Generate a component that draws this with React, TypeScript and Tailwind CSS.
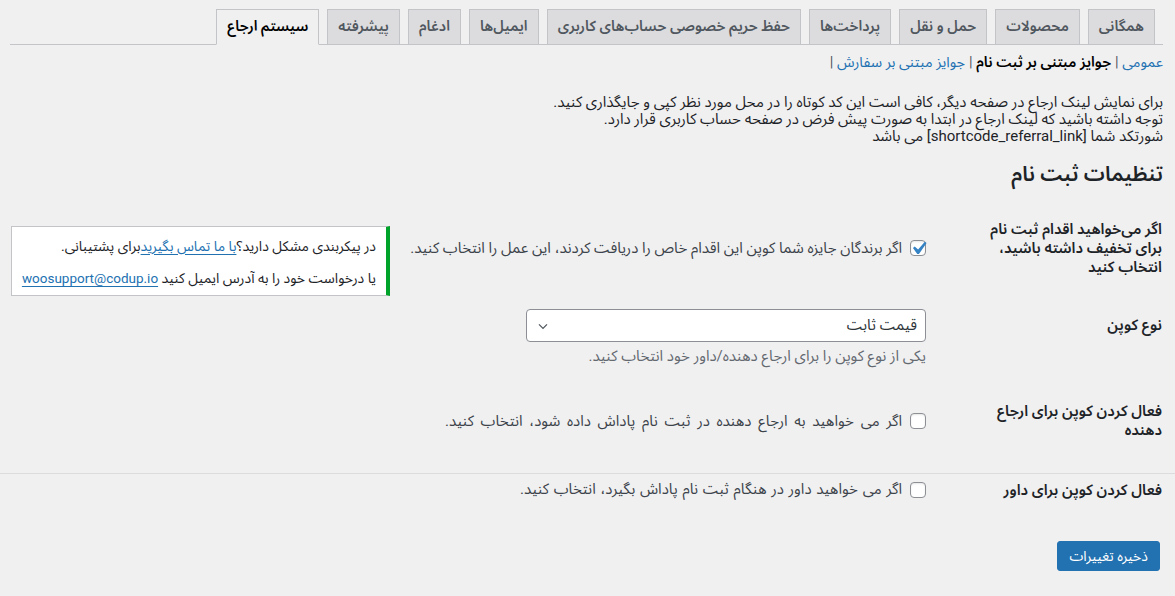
import React from 'react'

const tabs = [
  { label: 'همگانی' },
  { label: 'محصولات' },
  { label: 'حمل و نقل' },
  { label: 'پرداخت‌ها' },
  { label: 'حفظ حریم خصوصی حساب‌های کاربری' },
  { label: 'ایمیل‌ها' },
  { label: 'ادغام' },
  { label: 'پیشرفته' },
  { label: 'سیستم ارجاع', active: true },
]

function Checkbox({ checked }: { checked?: boolean }) {
  return (
    <span className="relative inline-flex h-4 w-4 shrink-0 rounded-[4px] border border-[#8c8f94] bg-white shadow-[inset_0_1px_2px_rgba(0,0,0,0.1)]">
      {checked && (
        <svg viewBox="2 2 16 16" className="absolute -left-[3px] -top-[3px] h-[21px] w-[21px]">
          <path fill="#3582c4" d="M14.83 4.89l1.34.94-5.81 8.38H9.02L5.78 9.67l1.34-1.25 2.57 2.4z" />
        </svg>
      )}
    </span>
  )
}

export default function App() {
  return (
    <div
      dir="rtl"
      className="min-h-[596px] bg-[#f0f0f1] text-[15px] text-[#3c434a] font-['Roboto','Noto_Sans_Arabic','DejaVu_Sans',sans-serif]"
    >
      <div className="pl-[10px] pr-[12px] pt-[9px]">
        {/* tabs */}
        <nav className="flex items-end gap-2 border-b border-[#c3c4c7] pr-2">
          {tabs.map((tab) => (
            <a
              key={tab.label}
              className={`-mb-px h-[36px] whitespace-nowrap border border-[#c3c4c7] px-2.5 py-[5px] text-[14.5px] font-semibold leading-6 ${
                tab.active
                  ? 'border-b-[#f0f0f1] bg-[#f0f0f1] text-black'
                  : 'bg-[#dcdcde] text-[#50575e]'
              }`}
            >
              {tab.label}
            </a>
          ))}
        </nav>

        {/* sub nav */}
        <ul className="mt-2 flex items-center gap-1 text-[14.5px] leading-5 text-[#50575e]">
          <li>
            <a className="text-[#2271b1]">عمومی</a> |
          </li>
          <li>
            <span className="font-semibold text-black">جوایز مبتنی بر ثبت نام</span> |
          </li>
          <li>
            <a className="text-[#2271b1]">جوایز مبتنی بر سفارش</a> |
          </li>
        </ul>

        <div className="mt-[21px] leading-[17px] text-[#1d2327]">
          <p>برای نمایش لینک ارجاع در صفحه دیگر، کافی است این کد کوتاه را در محل مورد نظر کپی و جایگذاری کنید.</p>
          <p>توجه داشته باشید که لینک ارجاع در ابتدا به صورت پیش فرض در صفحه حساب کاربری قرار دارد.</p>
          <p>شورتکد شما [shortcode_referral_link] می باشد</p>
        </div>

        <h2 className="mt-[17px] text-[21px] font-semibold leading-6 text-[#1d2327]">تنظیمات ثبت نام</h2>

        {/* row 1 */}
        <div className="mt-[13px] flex h-[98px] items-center">
          <div className="w-[227px] shrink-0 pr-px text-[15px] font-semibold leading-[19px] text-[#1d2327]">
            <div className="whitespace-nowrap">اگر می‌خواهید اقدام ثبت نام</div>
            <div className="whitespace-nowrap">برای تخفیف داشته باشید،</div>
            <div className="whitespace-nowrap">انتخاب کنید</div>
          </div>
          <div className="flex flex-1 items-center gap-2 pr-[10px] text-[#3c434a]">
            <Checkbox checked />
            <span className="whitespace-nowrap">اگر برندگان جایزه شما کوپن این اقدام خاص را دریافت کردند، این عمل را انتخاب کنید.</span>
          </div>
          <div className="ml-px mt-[27px] flex h-[70px] w-[379px] shrink-0 flex-col justify-center gap-[13px] self-start whitespace-nowrap border border-[#c3c4c7] border-r-4 border-r-[#00a32a] bg-white pl-2 pr-[10px] pt-[2px] text-[14px] leading-[19px] text-[#1d2327]">
            <p>
              در پیکربندی مشکل دارید؟<a className="text-[#2271b1] underline underline-offset-[3px]">با ما تماس بگیرید</a>برای پشتیبانی.
            </p>
            <p>
              یا درخواست خود را به آدرس ایمیل کنید{' '}
              <a className="text-[13.5px] text-[#2271b1] underline underline-offset-[3px]">woosupport@codup.io</a>
            </p>
          </div>
        </div>

        {/* row 2 */}
        <div className="flex h-[85px] items-start">
          <div className="w-[227px] shrink-0 pr-px pt-[18px] text-[15px] font-semibold leading-5 text-[#1d2327]">
            نوع کوپن
          </div>
          <div className="pr-[10px] pt-[12px]">
            <div className="flex h-[33px] w-[400px] items-center justify-between rounded-[4px] border border-[#8c8f94] bg-white pl-2 pr-2 text-[15px] text-[#2c3338]">
              <span>قیمت ثابت</span>
              <svg viewBox="0 0 20 20" className="h-4 w-4" fill="none" stroke="#50575e" strokeWidth="1.6">
                <path d="M5 8l5 5 5-5" />
              </svg>
            </div>
            <p className="mt-[6px] leading-[17px] text-[#646970]">یکی از نوع کوپن را برای ارجاع دهنده/داور خود انتخاب کنید.</p>
          </div>
        </div>

        {/* row 3 */}
        <div className="flex h-[78px] items-center">
          <div className="w-[227px] shrink-0 pr-px text-[15px] font-semibold leading-[19px] text-[#1d2327]">
            <div className="whitespace-nowrap">فعال کردن کوپن برای ارجاع</div>
            <div className="whitespace-nowrap">دهنده</div>
          </div>
          <div className="flex items-center gap-2 pr-[10px]">
            <Checkbox />
            <span className="whitespace-nowrap [word-spacing:3px]">اگر می خواهید به ارجاع دهنده در ثبت نام پاداش داده شود، انتخاب کنید.</span>
          </div>
        </div>
      </div>

      <div className="mt-[13px] border-t border-[#dcdcde]" />

      <div className="pl-[10px] pr-[12px]">
        {/* row 4 */}
        <div className="flex h-[31px] items-center">
          <div className="w-[227px] shrink-0 pr-px text-[15px] font-semibold leading-5 text-[#1d2327]">
            فعال کردن کوپن برای داور
          </div>
          <div className="flex items-center gap-2 pr-[10px]">
            <Checkbox />
            <span className="whitespace-nowrap [word-spacing:1px]">اگر می خواهید داور در هنگام ثبت نام پاداش بگیرد، انتخاب کنید.</span>
          </div>
        </div>

        <div className="mt-[36px] pr-[3px]">
          <button className="h-[30px] rounded-[3px] border border-[#2271b1] bg-[#2271b1] px-[11px] text-[14px] leading-7 text-white">
            ذخیره تغییرات
          </button>
        </div>
      </div>
    </div>
  )
}
